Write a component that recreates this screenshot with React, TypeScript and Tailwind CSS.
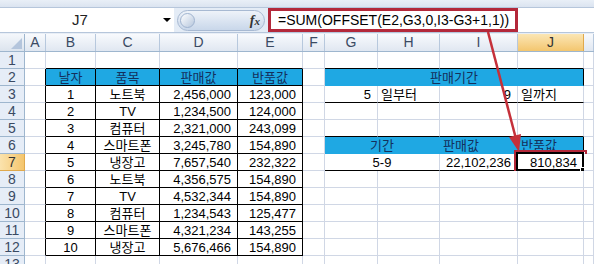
import React from 'react';

type B = 'k' | 'g' | 'b';
type Cell = { t?: string; span?: 1 | 2 | 4; al?: 'l' | 'c' | 'r'; blue?: boolean; rb?: B; bb?: B; active?: boolean };

const cols = ['A', 'B', 'C', 'D', 'E', 'F', 'G', 'H', 'I', 'J', ''];
const gridCols = 'grid grid-cols-[25px_21px_50px_64px_78px_65px_22px_53px_62px_78px_66px_10px]';

const items = [
  ['1', '노트북', '2,456,000', '123,000'],
  ['2', 'TV', '1,234,500', '124,000'],
  ['3', '컴퓨터', '2,321,000', '243,099'],
  ['4', '스마트폰', '3,245,780', '154,890'],
  ['5', '냉장고', '7,657,540', '232,322'],
  ['6', '노트북', '4,356,575', '154,890'],
  ['7', 'TV', '4,532,344', '154,890'],
  ['8', '컴퓨터', '1,234,543', '125,477'],
  ['9', '스마트폰', '4,321,234', '143,255'],
  ['10', '냉장고', '5,676,466', '154,890'],
];

function buildRow(r: number): Cell[] {
  const c: Cell[] = cols.map(() => ({}));
  const inT1 = r >= 2 && r <= 12;
  if (r === 1) {
    [1, 2, 3, 4].forEach((i) => (c[i].bb = 'k'));
    [6, 7, 8, 9].forEach((i) => (c[i].bb = 'k'));
  }
  if (inT1) {
    c[0].rb = 'k';
    [1, 2, 3, 4].forEach((i) => {
      c[i].rb = 'k';
      c[i].bb = 'k';
    });
  }
  if (r === 2) {
    ['날자', '품목', '판매값', '반품값'].forEach((t, i) => {
      c[i + 1].t = t;
      c[i + 1].al = 'c';
      c[i + 1].blue = true;
    });
    return [...c.slice(0, 6), { t: '판매기간', span: 4, al: 'c', blue: true, bb: 'b' }, c[10]];
  }
  if (r >= 3 && r <= 12) {
    const it = items[r - 3];
    c[1] = { ...c[1], t: it[0], al: 'c' };
    c[2] = { ...c[2], t: it[1], al: 'c' };
    c[3] = { ...c[3], t: it[2], al: 'r' };
    c[4] = { ...c[4], t: it[3], al: 'r' };
  }
  if (r === 3) {
    c[6] = { t: '5', al: 'r', bb: 'k' };
    c[7] = { t: '일부터', al: 'l', bb: 'k' };
    c[8] = { t: '9', al: 'r', bb: 'k' };
    c[9] = { t: '일까지', al: 'l', bb: 'k' };
  }
  if (r === 5) [6, 7, 8, 9].forEach((i) => (c[i].bb = 'k'));
  if (r === 6) {
    return [
      ...c.slice(0, 6),
      { t: '기간', span: 2, al: 'c', blue: true, rb: 'b', bb: 'b' },
      { t: '판매값', al: 'l', blue: true, rb: 'b', bb: 'b' },
      { t: '반품값', al: 'l', blue: true, bb: 'b' },
      c[10],
    ];
  }
  if (r === 7) {
    return [
      ...c.slice(0, 6),
      { t: '5-9', span: 2, al: 'c', bb: 'k' },
      { t: '22,102,236', al: 'r', bb: 'k' },
      { t: '810,834', al: 'r', bb: 'k', active: true },
      c[10],
    ];
  }
  return c;
}

function CellBox({ cell }: { cell: Cell }) {
  const rb = cell.rb ?? (cell.blue ? 'k' : 'g');
  const bb = cell.bb ?? (cell.blue ? 'k' : 'g');
  return (
    <div
      className={[
        'relative h-[17px] border-r border-b text-[13px] leading-[16px] whitespace-nowrap',
        cell.span === 2 ? 'col-span-2' : cell.span === 4 ? 'col-span-4' : '',
        rb === 'k' ? 'border-r-black' : rb === 'b' ? 'border-r-[#1fa8e3]' : 'border-r-[#d0d7e5]',
        bb === 'k' ? 'border-b-black' : bb === 'b' ? 'border-b-[#1fa8e3]' : 'border-b-[#d0d7e5]',
        cell.blue ? 'bg-[#1fa8e3] text-[#14305c]' : 'bg-white text-black',
        cell.al === 'c' ? 'text-center' : cell.al === 'r' ? 'text-right pr-[6px]' : 'text-left pl-[3px]',
      ].join(' ')}
    >
      <span className="relative top-px">{cell.t}</span>
      {cell.active && (
        <>
          <div className="absolute -left-[2px] -top-[2px] -right-px -bottom-px border-2 border-black" />
          <div className="absolute -left-[4px] -top-[4px] -right-[4px] -bottom-[5px] border-[2px] border-[#b3283a]" />
          <div className="absolute -right-[3px] -bottom-[3px] w-[6px] h-[6px] bg-black border border-white" />
        </>
      )}
    </div>
  );
}

export default function App() {
  const rows = Array.from({ length: 13 }, (_, i) => i + 1);
  return (
    <div
      className="relative w-[594px] h-[264px] overflow-hidden bg-white"
      style={{ fontFamily: '"Liberation Sans", "Noto Sans CJK KR", sans-serif' }}
    >
      <div className="h-[8px] bg-gradient-to-b from-[#e9eff7] to-[#dbe4f0] border-b border-[#b6c6db]" />
      <div className="flex h-[25px] bg-[#e4ecf6] border-b border-[#b6c6db]">
        <div className="w-[160px] bg-white text-center text-[15px] leading-[24px] text-[#222]">J7</div>
        <div className="w-[14px] bg-white flex items-center justify-center">
          <div className="w-0 h-0 border-l-[4px] border-r-[4px] border-t-[4px] border-l-transparent border-r-transparent border-t-black" />
        </div>
        <div className="w-[94px] flex items-center pl-[3px]">
          <div className="relative flex items-center w-[88px] h-[21px] rounded-full border border-[#a7b9d2] bg-gradient-to-b from-[#eef3f9] to-[#c9d7ea]">
            <div className="ml-[2px] w-[15px] h-[15px] rounded-full bg-gradient-to-br from-white to-[#b7c7dd] border border-[#9fb3cf]" />
            <span
              className="ml-auto mr-[4px] text-[14px] italic font-bold text-[#333]"
              style={{ fontFamily: '"Liberation Serif", serif' }}
            >
              f<span className="text-[11px]">x</span>
            </span>
          </div>
        </div>
        <div className="flex-1 bg-white flex items-center">
          <div className="ml-[0px] h-[24px] w-[250px] border-[3px] border-[#b3283a] text-[14px] leading-[18px] pl-[7px] text-black">
            =SUM(OFFSET(E2,G3,0,I3-G3+1,1))
          </div>
        </div>
      </div>
      <div className="h-[1px] bg-[#e8eef6]" />
      <div className={`${gridCols} h-[18px] border-b border-[#9eb6ce]`}>
        <div className="relative bg-gradient-to-b from-[#f4f7fb] to-[#dce4ee] border-r border-[#9eb6ce]">
          <div className="absolute right-[2px] bottom-[2px] w-0 h-0 border-l-[11px] border-t-[11px] border-l-transparent border-t-transparent border-b-0 border-r-0 [border-bottom:11px_solid_#b4c5dc]" />
        </div>
        {cols.map((l, i) => (
          <div
            key={i}
            className={
              l === 'J'
                ? 'bg-gradient-to-b from-[#fbe6b4] to-[#f3c66e] border-r border-[#e0a94c] text-center text-[14px] leading-[17px] text-[#333]'
                : 'bg-gradient-to-b from-[#f8fafd] to-[#e0e7f1] border-r border-[#b7c8dd] text-center text-[14px] leading-[17px] text-[#3a4a63]'
            }
          >
            {l}
          </div>
        ))}
      </div>
      {rows.map((r) => (
        <div key={r} className={gridCols}>
          <div
            className={
              r === 7
                ? 'h-[17px] bg-gradient-to-r from-[#fbe3ad] to-[#f4c56c] border-r border-b border-[#e0a94c] text-center text-[14px] leading-[17px] text-[#333]'
                : 'h-[17px] bg-[#e6edf7] border-r border-b border-[#9eb6ce] text-center text-[14px] leading-[17px] text-[#3a4a63]'
            }
          >
            {r}
          </div>
          {buildRow(r).map((cell, i) => (
            <CellBox key={i} cell={cell} />
          ))}
        </div>
      ))}
      <svg className="absolute inset-0 pointer-events-none" width="594" height="264">
        <line x1="488" y1="32" x2="515.5" y2="137" stroke="#c5303a" strokeWidth="2.5" />
        <polygon points="519,152 521,134 509,137" fill="#c5303a" />
      </svg>
    </div>
  );
}
